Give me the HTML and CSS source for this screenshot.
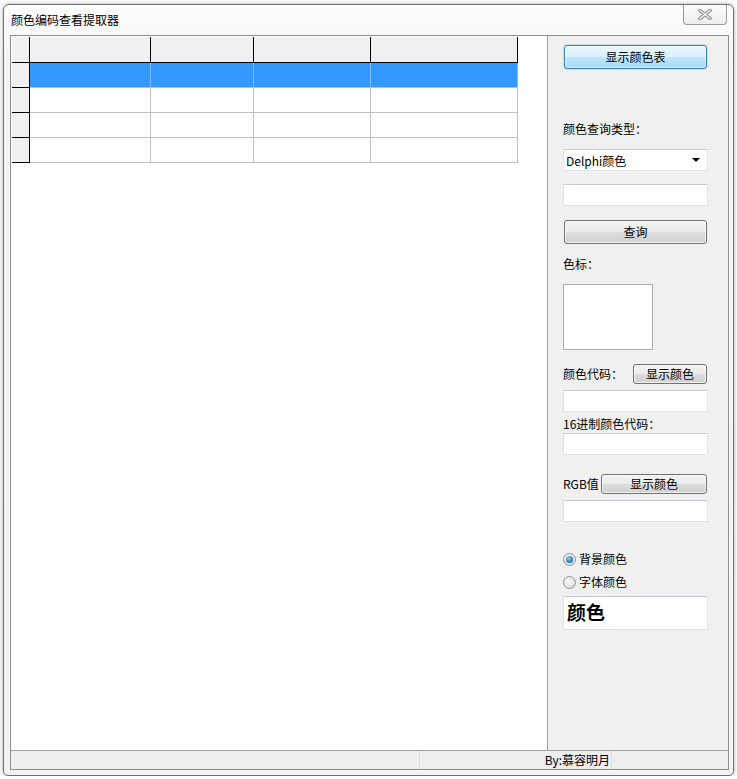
FILE: index.html
```html
<!DOCTYPE html>
<html lang="zh-CN">
<head>
    <meta charset="UTF-8">
    <title>颜色编码查看提取器</title>
    <link rel="stylesheet" href="styles.css">
</head>
<body>
    <div class="window">
        <div class="titlebar">
            <span class="title">颜色编码查看提取器</span>
            <div class="close">
                <svg width="14" height="11" viewBox="0 0 14 11">
                    <path d="M2 1.5 L12 9.5 M12 1.5 L2 9.5" stroke="#8a8a8a" stroke-width="3.4" stroke-linecap="square"/>
                    <path d="M2 1.5 L12 9.5 M12 1.5 L2 9.5" stroke="#f4f4f4" stroke-width="1.4" stroke-linecap="square"/>
                </svg>
            </div>
        </div>

        <div class="client">
            <div class="main">
                <!-- string grid -->
                <div class="grid-area">
                    <table class="grid">
                        <tr>
                            <th class="fixed"></th><th class="c1"></th><th class="c2"></th><th class="c3"></th><th class="c4"></th>
                        </tr>
                        <tr class="selected">
                            <td class="fixed"></td><td></td><td></td><td></td><td></td>
                        </tr>
                        <tr>
                            <td class="fixed"></td><td></td><td></td><td></td><td></td>
                        </tr>
                        <tr>
                            <td class="fixed"></td><td></td><td></td><td></td><td></td>
                        </tr>
                        <tr>
                            <td class="fixed"></td><td></td><td></td><td></td><td></td>
                        </tr>
                    </table>
                </div>

                <!-- right panel -->
                <div class="side">
                    <div class="btn focused btn-table">显示颜色表</div>
                    <div class="lbl lbl-type">颜色查询类型：</div>
                    <div class="combo">
                        <span>Delphi颜色</span>
                        <span class="arrow"></span>
                    </div>
                    <div class="edit edit-query"></div>
                    <div class="btn btn-query">查询</div>
                    <div class="lbl lbl-mark">色标：</div>
                    <div class="swatch"></div>

                    <div class="row row-code">
                        <span class="lbl">颜色代码：</span>
                        <div class="btn btn-show">显示颜色</div>
                    </div>
                    <div class="edit edit-code"></div>
                    <div class="lbl lbl-hex">16进制颜色代码：</div>
                    <div class="edit edit-hex"></div>

                    <div class="row row-rgb">
                        <span class="lbl">RGB值</span>
                        <div class="btn btn-rgb">显示颜色</div>
                    </div>
                    <div class="edit edit-rgb"></div>

                    <div class="radio radio-bg"><span class="dot checked"></span>背景颜色</div>
                    <div class="radio radio-font"><span class="dot"></span>字体颜色</div>
                    <div class="edit preview">颜色</div>
                </div>
            </div>

            <div class="status">
                <div class="panel p1"></div>
                <div class="panel p2">By:慕容明月</div>
                <div class="panel p3"></div>
            </div>
        </div>
    </div>
</body>
</html>
```

FILE: styles.css
```css
body {
    margin: 0;
    background: #ffffff;
    font-family: "Noto Sans CJK SC", "Liberation Sans", sans-serif;
    font-size: 12px;
    color: #000;
}

.window {
    margin: 4px 0 0 3px;
    width: 731px;
    height: 772px;
    box-sizing: border-box;
    border: 1px solid #707070;
    border-radius: 6px 6px 5px 5px;
    background: linear-gradient(#fdfdfd, #f3f4f6 60px, #f2f3f5);
    box-shadow: 0 0 4px rgba(0, 0, 0, 0.35);
    padding: 0 4px 5px 6px;
    display: flex;
    flex-direction: column;
}

/* title bar */
.titlebar {
    height: 30px;
    display: flex;
    align-items: flex-start;
}
.title {
    padding: 7px 0 0 1px;
    line-height: 16px;
    font-size: 12px;
}
.close {
    margin-left: auto;
    margin-right: 2px;
    width: 42px;
    height: 19px;
    border: 1px solid #9a9a9a;
    border-top: none;
    border-radius: 0 0 4px 4px;
    background: linear-gradient(#fbfbfb, #eeeeee);
    display: flex;
    align-items: center;
    justify-content: center;
}

/* client area */
.client {
    flex: 1;
    border: 1px solid #8e8e8e;
    display: flex;
    flex-direction: column;
}
.main {
    height: 714px;
    display: flex;
}
.grid-area {
    width: 535px;
    border-right: 1px solid #a0a0a0;
    background: #fff;
    padding: 1px 0 0 1px;
}

.grid {
    border-collapse: separate;
    border-spacing: 0;
}
.grid th,
.grid td {
    padding: 0;
    height: 24px;
    border-right: 1px solid #c0c0c0;
    border-bottom: 1px solid #c0c0c0;
}
.grid th {
    height: 25px;
    background: #f0f0f0;
    border-right-color: #000;
    border-bottom-color: #000;
}
.grid .fixed {
    width: 17px;
    background: #f0f0f0;
    border-right-color: #000;
    border-bottom-color: #000;
}
.grid .c1 { width: 120px; }
.grid .c2 { width: 102px; }
.grid .c3 { width: 116px; }
.grid .c4 { width: 146px; }
.grid .selected td {
    background: #3399ff;
    border-right-color: #80bbf6;
    border-bottom-color: #9cc6f0;
}
.grid .selected td.fixed {
    background: #f0f0f0;
    border-right-color: #000;
    border-bottom-color: #000;
}

/* side panel */
.side {
    flex: 1;
    background: #f0f0f0;
    padding: 0 20px 0 15px;
    display: flex;
    flex-direction: column;
}
.lbl {
    line-height: 14px;
    height: 14px;
    white-space: nowrap;
}
.btn {
    box-sizing: border-box;
    height: 24px;
    border: 1px solid #707070;
    border-radius: 3px;
    background: linear-gradient(#f2f2f2, #ebebeb 49%, #dddddd 51%, #cfcfcf);
    box-shadow: inset 0 0 0 1px rgba(255, 255, 255, 0.7);
    display: flex;
    align-items: center;
    justify-content: center;
    line-height: 14px;
}
.btn.focused {
    border-color: #3c7fb1;
    background: linear-gradient(#eaf6fd, #d9f0fc 49%, #bee6fd 51%, #a7d9f5);
    box-shadow: inset 0 0 0 1px rgba(255, 255, 255, 0.5), 0 0 2px #6fc3ee;
}
.edit {
    box-sizing: border-box;
    height: 22px;
    background: #fff;
    border: 1px solid #e0e3e8;
    border-top-color: #c9ccd2;
}
.btn-table { margin: 9px 1px 0 1px; }
.lbl-type { margin-top: 53px; }
.combo {
    margin-top: 13px;
    box-sizing: border-box;
    height: 22px;
    background: #fff;
    border: 1px solid #e0e3e8;
    border-top-color: #c9ccd2;
    display: flex;
    align-items: center;
    padding: 0 7px 0 2px;
}
.combo .arrow {
    margin-left: auto;
    width: 0;
    height: 0;
    border-left: 4px solid transparent;
    border-right: 4px solid transparent;
    border-top: 4px solid #000;
}
.edit-query { margin-top: 13px; }
.btn-query { margin: 14px 1px 0 1px; }
.lbl-mark { margin-top: 13px; }
.swatch {
    margin-top: 13px;
    width: 90px;
    height: 66px;
    box-sizing: border-box;
    background: #fff;
    border: 1px solid #acacac;
}

.row {
    height: 20px;
    display: flex;
    align-items: center;
}
.row .btn {
    height: 20px;
    margin-left: auto;
    margin-right: 1px;
}
.row-code { margin-top: 14px; }
.btn-show { width: 74px; }
.edit-code { margin-top: 6px; }
.lbl-hex { margin-top: 5px; }
.edit-hex { margin-top: 2px; }
.row-rgb { margin-top: 19px; }
.btn-rgb { width: 106px; }
.edit-rgb { margin-top: 6px; }

.radio {
    height: 16px;
    display: flex;
    align-items: center;
    line-height: 14px;
}
.radio-bg { margin-top: 29px; }
.radio-font { margin-top: 7px; }
.dot {
    box-sizing: border-box;
    width: 13px;
    height: 13px;
    border-radius: 50%;
    border: 1px solid #939393;
    background: radial-gradient(circle at 40% 40%, #f6f6f6, #d6d6d6);
    margin-right: 3px;
    position: relative;
}
.dot.checked::after {
    content: "";
    position: absolute;
    left: 2px;
    top: 2px;
    width: 7px;
    height: 7px;
    border-radius: 50%;
    background: radial-gradient(circle at 40% 35%, #8ad2f5, #1f6fa8 70%, #164f7c);
}

.preview {
    margin-top: 6px;
    height: 34px;
    padding: 3px 0 0 3px;
    font-size: 19px;
    font-weight: 600;
    line-height: 24px;
}

/* status bar */
.status {
    flex: 1;
    border-top: 1px solid #a0a0a0;
    background: #efeded;
    display: flex;
}
.panel {
    border-right: 1px solid #dcdcdc;
    line-height: 17px;
}
.p1 { width: 408px; }
.p2 {
    width: 192px;
    text-align: right;
    padding-right: 1px;
    box-sizing: border-box;
    white-space: nowrap;
}
.p3 { flex: 1; border-right: none; }
```
